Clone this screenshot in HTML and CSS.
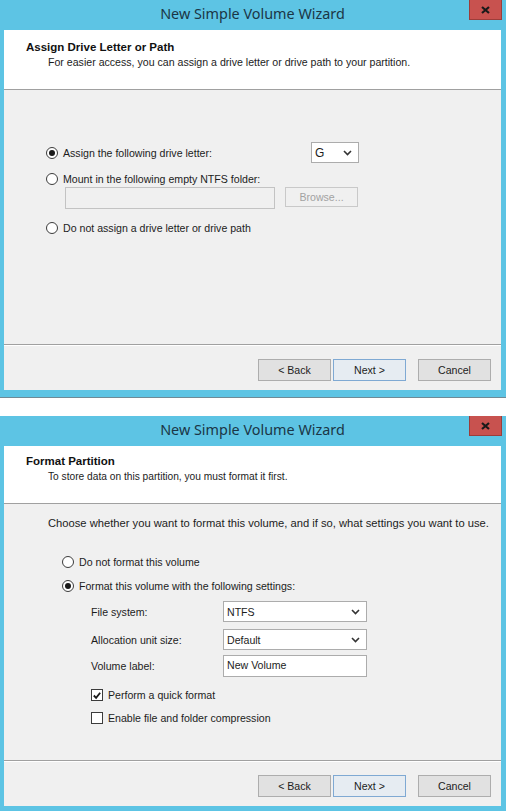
FILE: index.html
```html
<!DOCTYPE html>
<html>
<head>
<meta charset="utf-8">
<title>New Simple Volume Wizard</title>
<link rel="stylesheet" href="styles.css">
</head>
<body>
<div class="window window--first">
  <div class="titlebar">
    <span class="title">New Simple Volume Wizard</span>
    <span class="close"><svg width="9" height="8" viewBox="0 0 9 8"><path d="M1 1 L8 7 M8 1 L1 7" stroke="#1a1a1a" stroke-width="2.2" fill="none"/></svg></span>
  </div>
  <div class="client">
    <div class="header header--first">
      <div class="h-title">Assign Drive Letter or Path</div>
      <div class="h-sub">For easier access, you can assign a drive letter or drive path to your partition.</div>
    </div>
    <div class="content content--first">
      <div class="row row-letter">
        <div class="opt opt-wide"><span class="radio on"></span><span>Assign the following drive letter:</span></div>
        <div class="combo combo-letter"><span class="combo-text">G</span><svg class="chev" width="9" height="6" viewBox="0 0 9 6"><path d="M1 1 L4.5 4.5 L8 1" stroke="#333" stroke-width="1.6" fill="none"/></svg></div>
      </div>
      <div class="row row-mount">
        <div class="opt"><span class="radio"></span><span>Mount in the following empty NTFS folder:</span></div>
      </div>
      <div class="row row-path">
        <div class="textbox textbox-disabled"></div>
        <div class="btn btn-disabled">Browse...</div>
      </div>
      <div class="row row-none">
        <div class="opt"><span class="radio"></span><span>Do not assign a drive letter or drive path</span></div>
      </div>
    </div>
    <div class="footer">
      <div class="btn">&lt; Back</div>
      <div class="btn btn-default">Next &gt;</div>
      <div class="btn btn-cancel">Cancel</div>
    </div>
  </div>
</div>
<div class="gap"></div>
<div class="window window--second">
  <div class="titlebar">
    <span class="title">New Simple Volume Wizard</span>
    <span class="close"><svg width="9" height="8" viewBox="0 0 9 8"><path d="M1 1 L8 7 M8 1 L1 7" stroke="#1a1a1a" stroke-width="2.2" fill="none"/></svg></span>
  </div>
  <div class="client">
    <div class="header header--second">
      <div class="h-title">Format Partition</div>
      <div class="h-sub h-sub--narrow">To store data on this partition, you must format it first.</div>
    </div>
    <div class="content content--second">
      <div class="intro">Choose whether you want to format this volume, and if so, what settings you want to use.</div>
      <div class="row row-noformat">
        <div class="opt"><span class="radio"></span><span>Do not format this volume</span></div>
      </div>
      <div class="row row-format">
        <div class="opt"><span class="radio on"></span><span>Format this volume with the following settings:</span></div>
      </div>
      <div class="row field field-fs">
        <div class="field-label">File system:</div>
        <div class="combo combo-wide"><span class="combo-text">NTFS</span><svg class="chev" width="9" height="6" viewBox="0 0 9 6"><path d="M1 1 L4.5 4.5 L8 1" stroke="#333" stroke-width="1.6" fill="none"/></svg></div>
      </div>
      <div class="row field field-alloc">
        <div class="field-label">Allocation unit size:</div>
        <div class="combo combo-wide"><span class="combo-text">Default</span><svg class="chev" width="9" height="6" viewBox="0 0 9 6"><path d="M1 1 L4.5 4.5 L8 1" stroke="#333" stroke-width="1.6" fill="none"/></svg></div>
      </div>
      <div class="row field field-label-row">
        <div class="field-label">Volume label:</div>
        <div class="textbox textbox-label">New Volume</div>
      </div>
      <div class="row row-quick">
        <div class="opt"><span class="check"><svg width="11" height="11" viewBox="0 0 11 11"><path d="M2 5.5 L4.5 8 L9 2.5" stroke="#1a1a1a" stroke-width="2" fill="none"/></svg></span><span>Perform a quick format</span></div>
      </div>
      <div class="row row-compress">
        <div class="opt"><span class="check"></span><span>Enable file and folder compression</span></div>
      </div>
    </div>
    <div class="footer">
      <div class="btn">&lt; Back</div>
      <div class="btn btn-default">Next &gt;</div>
      <div class="btn btn-cancel">Cancel</div>
    </div>
  </div>
</div>
</body>
</html>
```
FILE: styles.css
```css
* {
  box-sizing: border-box;
}

html, body {
  margin: 0;
  padding: 0;
  background: #ffffff;
}

body {
  width: 506px;
  height: 811px;
  overflow: hidden;
  font-family: "Liberation Sans", Arial, sans-serif;
  font-size: 10.6px;
  color: #1c1c1c;
}

.window {
  display: flex;
  flex-direction: column;
  background: #5dc4e4;
  padding: 0 5px 0 4px;
}

.window--first {
  height: 398px;
  padding-bottom: 7px;
  border-bottom: 1px solid #6f8a96;
}

.window--second {
  height: 395px;
  padding-bottom: 5px;
}

.gap {
  height: 18px;
}

.titlebar {
  position: relative;
  height: 30px;
  flex: none;
  text-align: center;
}

.title {
  display: block;
  padding-top: 5px;
  font-family: "Noto Sans", "Liberation Sans", sans-serif;
  font-size: 14.4px;
  line-height: 18px;
  color: #1b3646;
}

.close {
  position: absolute;
  top: 0;
  right: -1px;
  width: 33px;
  height: 20px;
  display: flex;
  align-items: center;
  justify-content: center;
  background: #c8524f;
  border: 1px solid #9c3d3a;
  border-top: none;
}

.client {
  height: 360px;
  display: flex;
  flex-direction: column;
  background: #f0f0f0;
}

.header {
  flex: none;
  background: #ffffff;
  border-bottom: 1px solid #a0a0a0;
  padding-left: 22px;
}

.header--first {
  height: 60px;
  padding-top: 10px;
}

.header--second {
  height: 58px;
  padding-top: 8px;
}

.h-title {
  font-weight: bold;
  font-size: 11.5px;
  line-height: 15px;
  color: #111;
}

.h-sub {
  line-height: 15px;
  padding-left: 22px;
}

.h-sub--narrow {
  font-size: 10.2px;
}

.content {
  flex: 1;
  display: flex;
  flex-direction: column;
  border-bottom: 1px solid #a0a0a0;
}

.content--first {
  padding: 52px 0 0 42px;
}

.content--second {
  padding: 12px 0 0 44px;
}

.row {
  display: flex;
  align-items: center;
}

.opt {
  display: flex;
  align-items: center;
  line-height: 14px;
  height: 14px;
}

.opt-wide {
  width: 265px;
}

.radio {
  flex: none;
  width: 12px;
  height: 12px;
  margin-right: 5px;
  border: 1px solid #3c3c3c;
  border-radius: 50%;
  background: #fff;
  display: flex;
  align-items: center;
  justify-content: center;
}

.radio.on::after {
  content: "";
  width: 6px;
  height: 6px;
  border-radius: 50%;
  background: #1a1a1a;
}

.check {
  flex: none;
  width: 12px;
  height: 12px;
  margin-right: 5px;
  border: 1px solid #3c3c3c;
  background: #fff;
  display: flex;
  align-items: center;
  justify-content: center;
}

.combo {
  display: flex;
  align-items: center;
  justify-content: space-between;
  height: 21px;
  padding: 0 6px 0 3px;
  border: 1px solid #acacac;
  background: #fff;
}

.combo-letter {
  width: 48px;
}

.combo-letter .combo-text {
  font-size: 12px;
}

.combo-wide {
  width: 144px;
}

.row-letter {
  height: 21px;
}

.row-mount {
  margin-top: 9px;
}

.row-path {
  margin-top: 1px;
  margin-left: 19px;
  align-items: flex-start;
}

.row-none {
  margin-top: 12px;
}

.textbox {
  height: 22px;
  border: 1px solid #acacac;
  background: #fff;
  padding: 1px 3px;
  line-height: 16px;
}

.textbox-disabled {
  width: 210px;
  background: #f0f0f0;
  border-color: #c3c3c3;
}

.btn {
  flex: none;
  width: 73px;
  height: 22px;
  display: flex;
  align-items: center;
  justify-content: center;
  background: #e1e1e1;
  border: 1px solid #adadad;
}

.btn-disabled {
  margin-left: 10px;
  height: 20px;
  color: #a2a2a2;
  background: #f0f0f0;
  border-color: #c9c9c9;
}

.btn-default {
  background: #e6ecf2;
  border-color: #7fa9d3;
}

.btn-cancel {
  margin-left: 10px;
}

.footer {
  flex: none;
  height: 45px;
  display: flex;
  justify-content: flex-end;
  gap: 2px;
  padding: 13px 10px 0 0;
  border-top: 1px solid #ffffff;
}

.intro {
  line-height: 14px;
  font-size: 11.2px;
}

.row-noformat {
  margin-top: 25px;
  margin-left: 14px;
}

.row-format {
  margin-top: 10px;
  margin-left: 14px;
}

.field {
  margin-left: 43px;
}

.field-label {
  width: 132px;
}

.field-fs {
  margin-top: 8px;
}

.field-alloc {
  margin-top: 7px;
}

.field-label-row {
  margin-top: 5px;
}

.textbox-label {
  width: 144px;
}

.row-quick {
  margin-top: 11px;
  margin-left: 43px;
}

.row-compress {
  margin-top: 9px;
  margin-left: 43px;
}
```
